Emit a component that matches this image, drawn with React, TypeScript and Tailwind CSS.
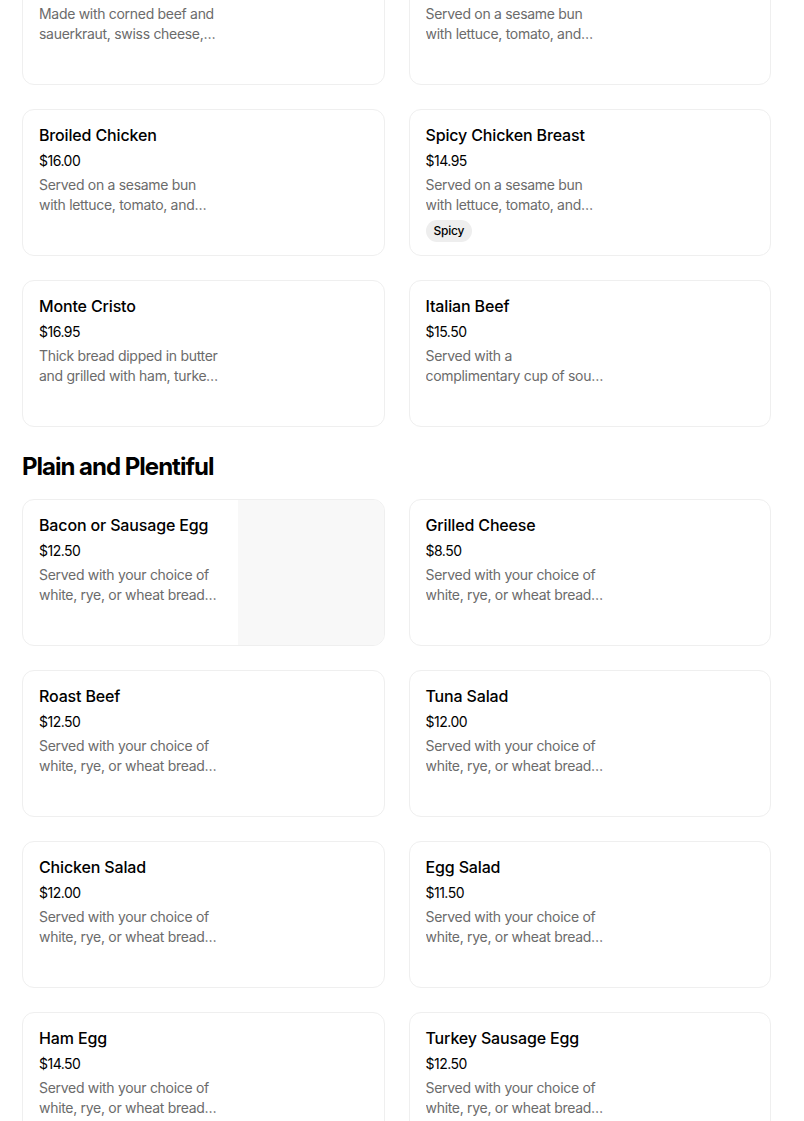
import React from "react";

type Item = { name: string; price: string; desc: string; badge?: string; image?: boolean };

const section1: Item[] = [
  { name: "Reuben", price: "$16.95", desc: "Made with corned beef and sauerkraut, swiss cheese, and thousand island dressing on rye." },
  { name: "Grilled Chicken Breast", price: "$14.95", desc: "Served on a sesame bun with lettuce, tomato, and mayo. Served with fries." },
  { name: "Broiled Chicken", price: "$16.00", desc: "Served on a sesame bun with lettuce, tomato, and mayo. Served with fries." },
  { name: "Spicy Chicken Breast", price: "$14.95", desc: "Served on a sesame bun with lettuce, tomato, and mayo. Served with fries.", badge: "Spicy" },
  { name: "Monte Cristo", price: "$16.95", desc: "Thick bread dipped in butter and grilled with ham, turkey, and swiss cheese." },
  { name: "Italian Beef", price: "$15.50", desc: "Served with a complimentary cup of soup or salad and fries." },
];

const bread = "Served with your choice of white, rye, or wheat bread and a side of fries.";
const section2: Item[] = [
  { name: "Bacon or Sausage Egg", price: "$12.50", desc: bread, image: true },
  { name: "Grilled Cheese", price: "$8.50", desc: bread },
  { name: "Roast Beef", price: "$12.50", desc: bread },
  { name: "Tuna Salad", price: "$12.00", desc: bread },
  { name: "Chicken Salad", price: "$12.00", desc: bread },
  { name: "Egg Salad", price: "$11.50", desc: bread },
  { name: "Ham Egg", price: "$14.50", desc: bread },
  { name: "Turkey Sausage Egg", price: "$12.50", desc: bread },
];

function Card({ item }: { item: Item }) {
  return (
    <div className="flex h-[147px] overflow-hidden rounded-xl border border-[#efefef] bg-white">
      <div className="flex min-w-0 flex-1 flex-col px-4 pt-[15px]">
        <div className="text-[16px] font-medium leading-5 tracking-[-0.15px] text-black">{item.name}</div>
        <div className="mt-[6px] text-[14px] leading-5 tracking-[-0.5px] text-black">{item.price}</div>
        <div className="mt-1 w-[184px] line-clamp-2 text-[14px] leading-5 tracking-[-0.3px] text-[#6b6b6b]">
          {item.desc}
        </div>
        {item.badge && (
          <div className="mt-[5px] flex">
            <span className="rounded-full bg-[#eeeeee] px-2 py-[3px] text-[12px] font-medium leading-4 tracking-[-0.2px] text-black">
              {item.badge}
            </span>
          </div>
        )}
      </div>
      {item.image && <div className="w-[146px] shrink-0 bg-[#f8f8f8]" />}
    </div>
  );
}

export default function App() {
  return (
    <div
      className="h-[1121px] overflow-hidden bg-white"
      style={{ fontFamily: "Inter, 'Noto Sans', sans-serif" }}
    >
      <div className="mt-[-62px] pl-[22px] pr-[33px]">
        <div className="grid grid-cols-2 gap-6">
          {section1.map((it) => (
            <Card key={it.name} item={it} />
          ))}
        </div>
        <h2 className="mb-4 mt-6 h-8 text-[24px] font-bold leading-8 tracking-[-1px] text-black">
          Plain and Plentiful
        </h2>
        <div className="grid grid-cols-2 gap-6">
          {section2.map((it) => (
            <Card key={it.name} item={it} />
          ))}
        </div>
      </div>
    </div>
  );
}
